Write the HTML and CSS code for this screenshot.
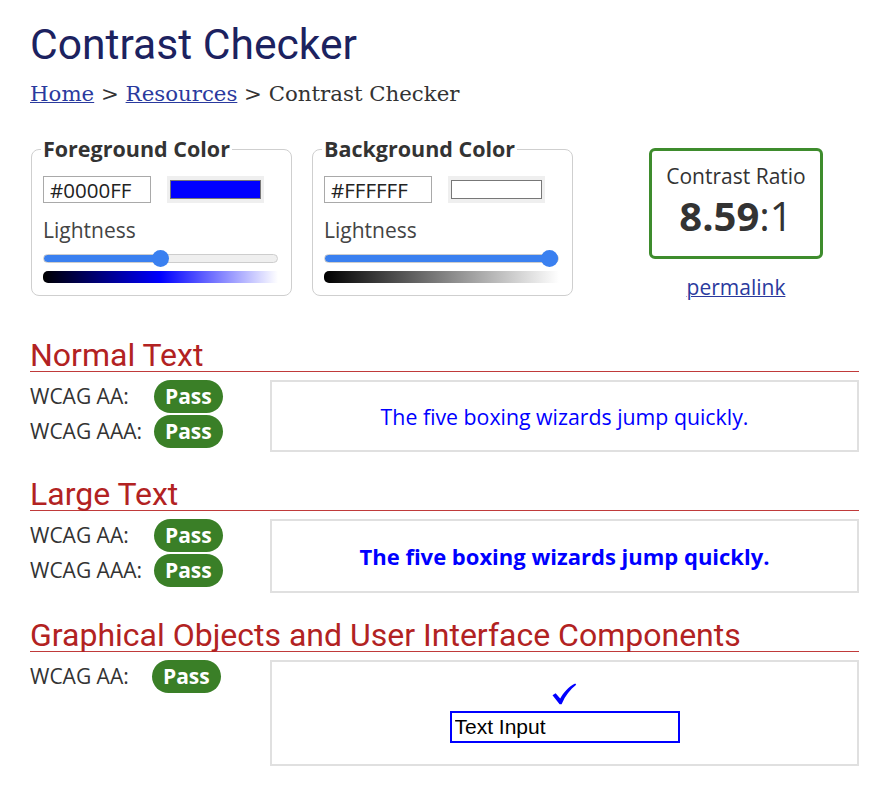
FILE: index.html
```html
<!DOCTYPE html>
<html lang="en">
<head>
<meta charset="utf-8">
<title>Contrast Checker</title>
<link rel="stylesheet" href="styles.css">
</head>
<body>
<main class="page">
  <h1 class="title">Contrast Checker</h1>
  <nav class="crumbs"><a href="#">Home</a> &gt; <a href="#">Resources</a> &gt; Contrast Checker</nav>

  <div class="top">
    <fieldset class="picker">
      <legend>Foreground Color</legend>
      <div class="hex-row">
        <input class="hex" type="text" value="#0000FF">
        <div class="swatch"><div class="swatch-fill swatch-blue"></div></div>
      </div>
      <div class="light-label">Lightness</div>
      <input class="range" type="range" min="0" max="100" value="50" style="--val:50%">
      <div class="grad grad-blue"></div>
    </fieldset>

    <fieldset class="picker">
      <legend>Background Color</legend>
      <div class="hex-row">
        <input class="hex" type="text" value="#FFFFFF">
        <div class="swatch"><div class="swatch-fill swatch-white"></div></div>
      </div>
      <div class="light-label">Lightness</div>
      <input class="range" type="range" min="0" max="100" value="100" style="--val:100%">
      <div class="grad grad-gray"></div>
    </fieldset>

    <div class="result">
      <div class="ratio-box">
        <div class="ratio-label">Contrast Ratio</div>
        <div class="ratio-value"><b>8.59</b>:1</div>
      </div>
      <a class="permalink" href="#">permalink</a>
    </div>
  </div>

  <section class="sec sec-first">
    <h2 class="sec-title">Normal Text</h2>
    <div class="sec-body">
      <div class="checks">
        <div class="check"><span class="lbl">WCAG AA:</span><span class="pass">Pass</span></div>
        <div class="check"><span class="lbl">WCAG AAA:</span><span class="pass">Pass</span></div>
      </div>
      <div class="sample sample-normal">The five boxing wizards jump quickly.</div>
    </div>
  </section>

  <section class="sec">
    <h2 class="sec-title">Large Text</h2>
    <div class="sec-body">
      <div class="checks">
        <div class="check"><span class="lbl">WCAG AA:</span><span class="pass">Pass</span></div>
        <div class="check"><span class="lbl">WCAG AAA:</span><span class="pass">Pass</span></div>
      </div>
      <div class="sample sample-large">The five boxing wizards jump quickly.</div>
    </div>
  </section>

  <section class="sec">
    <h2 class="sec-title">Graphical Objects and User Interface Components</h2>
    <div class="sec-body">
      <div class="checks">
        <div class="check check-narrow"><span class="lbl">WCAG AA:</span><span class="pass">Pass</span></div>
      </div>
      <div class="sample sample-ui">
        <svg class="tick" width="26" height="22" viewBox="0 0 26 22" aria-hidden="true">
          <path d="M1.5 12.2 L4.6 10.2 L9.2 15.6 C12.6 9.4 17.6 3.9 24.2 0.6 L25.2 1.8 C19.2 6.2 14.4 12.6 10.6 21.2 L8.6 21.2 Z" fill="#0000ff"/>
        </svg>
        <input class="demo-input" type="text" value="Text Input">
      </div>
    </div>
  </section>
</main>
</body>
</html>
```

FILE: styles.css
```css
* { box-sizing: border-box; }

body {
  margin: 0;
  background: #fff;
  font-family: "Open Sans", "DejaVu Sans", sans-serif;
  color: #333;
}

.page {
  padding: 20px 16px 20px 30px;
}

.title {
  margin: 0;
  font-family: Roboto, "Liberation Sans", sans-serif;
  font-weight: 400;
  font-size: 42.6px;
  line-height: 48px;
  color: #1c2260;
}

.crumbs {
  margin-top: 14px;
  font-family: "DejaVu Serif", "Liberation Serif", serif;
  font-size: 21.3px;
  line-height: 24px;
  color: #333;
}

.crumbs a {
  color: #2a3a9e;
  text-decoration: underline;
  text-decoration-thickness: 1px;
}

.top {
  display: flex;
  align-items: flex-start;
  margin-top: 31px;
  padding-left: 1px;
}

.picker {
  width: 261px;
  margin: 0 20px 0 0;
  padding: 0 13px 12px 11px;
  border: 1px solid #cfcfcf;
  border-radius: 8px;
  min-width: 0;
}

.picker legend {
  padding: 0 2px;
  margin-left: -2px;
  font-weight: 700;
  font-size: 21.5px;
  line-height: 24px;
  color: #333;
}

.hex-row {
  display: flex;
  align-items: center;
  gap: 16px;
  margin-top: 15px;
}

.hex {
  width: 108px;
  height: 27px;
  margin: 0;
  padding: 0 6px;
  border: 1px solid #a9a9a9;
  border-radius: 0;
  font-family: "Open Sans", sans-serif;
  font-size: 20.5px;
  color: #222;
  background: #fff;
  outline: none;
}

.swatch {
  width: 97px;
  height: 27px;
  padding: 4px 3px;
  background: #efefef;
}

.swatch-fill {
  width: 100%;
  height: 100%;
  border: 1px solid #777;
}

.swatch-blue { background: #0000ff; }
.swatch-white { background: #fff; }

.light-label {
  margin-top: 15px;
  font-size: 21px;
  line-height: 24px;
  color: #444;
}

.range {
  -webkit-appearance: none;
  appearance: none;
  display: block;
  width: 235px;
  height: 17px;
  margin: 8px 0 0;
  padding: 0;
  background: transparent;
}

.range::-webkit-slider-runnable-track {
  height: 9px;
  border-radius: 5px;
  border: 1px solid #cdcdcd;
  background: linear-gradient(to right, #3a80f0 var(--val), #efefef var(--val));
}

.range::-webkit-slider-thumb {
  -webkit-appearance: none;
  appearance: none;
  width: 17px;
  height: 17px;
  margin-top: -5px;
  border-radius: 50%;
  background: #3a80f0;
  border: none;
}

.grad {
  width: 235px;
  height: 12px;
  margin-top: 4px;
  border-radius: 5px 0 0 5px;
}

.grad-blue { background: linear-gradient(to right, #000 0%, #0000ff 50%, #fff 100%); }
.grad-gray { background: linear-gradient(to right, #000 0%, #fff 100%); }

.result {
  display: flex;
  flex-direction: column;
  align-items: center;
  width: 174px;
  margin-left: 56px;
  margin-top: 11px;
}

.ratio-box {
  width: 174px;
  padding: 13px 0 20px;
  border: 3px solid #3e8c2d;
  border-radius: 6px;
  text-align: center;
  color: #333;
}

.ratio-label {
  font-size: 21px;
  line-height: 24px;
}

.ratio-value {
  margin-top: 8px;
  font-size: 40px;
  line-height: 40px;
}

.ratio-value b { font-weight: 700; }

.permalink {
  margin-top: 16px;
  font-size: 21px;
  line-height: 24px;
  color: #2a3a9e;
  text-decoration: underline;
  text-decoration-thickness: 1px;
}

.sec { margin-top: 26px; }
.sec-first { margin-top: 40px; }

.sec-title {
  margin: 0;
  font-family: Roboto, "Liberation Sans", sans-serif;
  font-weight: 400;
  font-size: 32px;
  line-height: 32px;
  color: #b22222;
  border-bottom: 1px solid #c03a3a;
}

.sec-body {
  display: flex;
  align-items: flex-start;
  margin-top: 8px;
}

.checks {
  width: 240px;
  display: flex;
  flex-direction: column;
  gap: 2px;
}

.check {
  display: flex;
  align-items: center;
  height: 33px;
}

.lbl {
  width: 124px;
  font-size: 21px;
  line-height: 33px;
  color: #333;
}

.check-narrow .lbl { width: 122px; }

.pass {
  height: 33px;
  padding: 0 11px;
  border-radius: 17px;
  background: #3a7f27;
  color: #fff;
  font-weight: 700;
  font-size: 21px;
  line-height: 33px;
}

.sample {
  flex: 1;
  display: flex;
  align-items: center;
  justify-content: center;
  border: 2px solid #e0e0e0;
  color: #0000ff;
}

.sample-normal {
  height: 72px;
  font-size: 21.3px;
}

.sample-large {
  height: 74px;
  font-size: 22px;
  font-weight: 700;
}

.sample-ui {
  height: 106px;
  flex-direction: column;
  gap: 6px;
}

.tick {
  display: block;
  margin-left: -2px;
}

.demo-input {
  width: 230px;
  height: 32px;
  margin: 0;
  padding: 0 3px;
  border: 2px solid #0000ff;
  border-radius: 0;
  font-family: "Liberation Sans", Arial, sans-serif;
  font-size: 21px;
  color: #000;
  background: #fff;
  outline: none;
}
```
